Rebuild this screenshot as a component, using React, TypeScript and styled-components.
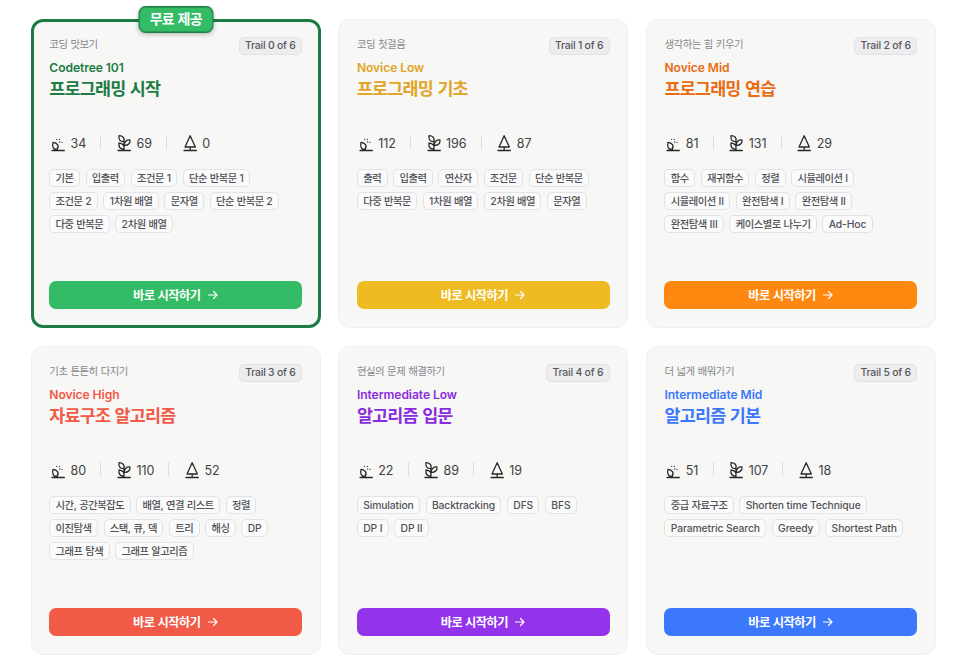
import React from "react";
import styled, { createGlobalStyle } from "styled-components";

const GlobalStyle = createGlobalStyle`
  * { box-sizing: border-box; }
  body {
    margin: 0;
    background: #fff;
    font-family: Inter, "Noto Sans CJK KR", sans-serif;
    overflow: hidden;
  }
`;

const Page = styled.main`
  height: 667px;
  padding: 18.6px 24px 0 30.8px;
  overflow: hidden;
`;

const Grid = styled.div`
  display: grid;
  grid-template-columns: repeat(3, 290px);
  grid-auto-rows: 309px;
  column-gap: 17.6px;
  row-gap: 18px;
`;

const Card = styled.article<{ $featured?: boolean }>`
  position: relative;
  display: flex;
  flex-direction: column;
  padding: ${(p) => (p.$featured ? "15.5px" : "17.5px")};
  padding-top: ${(p) => (p.$featured ? "15px" : "17px")};
  border: ${(p) => (p.$featured ? "3px solid #1d7c45" : "1px solid #f0f0ec")};
  border-radius: 12px;
  background: #f7f7f5;
`;

const FreeBadge = styled.div`
  position: absolute;
  top: -16px;
  left: 50%;
  transform: translateX(-50%);
  display: flex;
  align-items: center;
  justify-content: center;
  width: 75px;
  height: 27px;
  border: 1px solid #1d7c45;
  border-radius: 7px;
  background: #33bb66;
  box-shadow: 0 2px 4px rgba(0, 0, 0, 0.22), inset 0 0 0 0.5px #1d7c45;
  color: #fff;
  font-size: 14px;
  font-weight: 700;
  line-height: 20px;
  white-space: nowrap;
`;

const Header = styled.header`
  display: flex;
  justify-content: space-between;
  height: 91px;
`;

const Titles = styled.div`
  display: flex;
  flex-direction: column;
`;

const Subtitle = styled.div`
  height: 16px;
  line-height: 16px;
  color: #85888e;
  font-size: 10.4px;
`;

const Level = styled.div<{ $color: string }>`
  height: 20px;
  line-height: 29px;
  color: ${(p) => p.$color};
  font-size: 12.1px;
  font-weight: 600;
  letter-spacing: -0.006em;
`;

const Title = styled.h2<{ $color: string }>`
  margin: 4px 0 0;
  line-height: 24px;
  color: ${(p) => p.$color};
  font-size: 17.4px;
  font-weight: 600;
`;

const TrailBadge = styled.div`
  display: flex;
  align-items: center;
  height: 18px;
  padding: 0 5.6px;
  border: 1px solid #e1e2e6;
  border-radius: 5px;
  background: #ededef;
  color: #55575c;
  font-size: 10.4px;
  letter-spacing: -0.02em;
  font-weight: 500;
  white-space: nowrap;
`;

const Stats = styled.div`
  display: flex;
  align-items: center;
  height: 41px;
  padding-bottom: 10px;
`;

const Stat = styled.div`
  display: flex;
  align-items: center;
  gap: 3.3px;
  color: #3f4144;
  font-size: 12.5px;
  letter-spacing: -0.005em;
`;

const Divider = styled.span`
  width: 1px;
  height: 14px;
  margin: -3px 13.8px 0 14.2px;
  background: #dddddf;
`;

const Icon = styled.svg`
  width: 18px;
  height: 18px;
  fill: none;
  stroke: #262727;
  stroke-width: 3.8;
  stroke-linecap: round;
  stroke-linejoin: round;
`;

const Tags = styled.div`
  display: flex;
  flex-direction: column;
  gap: 5px;
`;

const TagRow = styled.div`
  display: flex;
  gap: 5.6px;
`;

const Tag = styled.span`
  display: flex;
  align-items: center;
  height: 18px;
  padding: 0 5.3px;
  border: 1px solid #e2e3e7;
  border-radius: 5px;
  background: #fafafa;
  color: #505257;
  font-size: 10.3px;
  letter-spacing: -0.01em;
  font-weight: 500;
  white-space: pre;
`;

const StartButton = styled.button<{ $color: string }>`
  display: flex;
  align-items: center;
  justify-content: center;
  gap: 6px;
  flex: none;
  height: 28px;
  margin-top: auto;
  border: 0;
  border-radius: 7px;
  background: ${(p) => p.$color};
  color: #fff;
  font-family: inherit;
  font-size: 12.3px;
  font-weight: 700;
`;

const Arrow = styled.svg`
  width: 12px;
  height: 12px;
  fill: none;
  stroke: currentColor;
  stroke-width: 1.2;
  stroke-linecap: round;
  stroke-linejoin: round;
`;

const Hangul = styled.span`
  letter-spacing: -0.045em;
`;

const Label = styled.span`
  white-space: pre;
`;

function Text({ children }: { children: string }) {
  return (
    <Label>
      {children
        .split(/([가-힣]+)/)
        .filter(Boolean)
        .map((run, i) => (/[가-힣]/.test(run) ? <Hangul key={i}>{run}</Hangul> : run))}
    </Label>
  );
}

const SeedIcon = () => (
  <Icon viewBox="0 0 54 54">
    <path d="M9 49.5H46M25 49V41M24 46C12 48 9 37 12 25C24 26 32 36 24 46Z" />
    <path d="M23 16h.1M31 16h.1M32 24h.1M39 25h.1" />
  </Icon>
);

const PlantIcon = () => (
  <Icon viewBox="0 0 54 54">
    <path d="M9 49.5H46M27 49V15M27 23C15 24 10 16 12 5C23 5 30 12 27 23ZM28 34C27 23 35 17 45 18C46 28 39 35 28 34ZM27 45C15 46 10 38 12 27C23 28 29 34 27 45Z" />
  </Icon>
);

const TreeIcon = () => (
  <Icon viewBox="0 0 54 54">
    <path d="M27.5 5L12 39H43ZM27.5 39V49M9 49.5H46" />
  </Icon>
);

interface Trail {
  subtitle: string;
  level: string;
  title: string;
  text: string;
  button: string;
  stats: [number, number, number];
  tags: string[][];
  free?: boolean;
}

const trails: Trail[] = [
  {
    subtitle: "코딩 맛보기",
    level: "Codetree 101",
    title: "프로그래밍 시작",
    text: "#1d7c45",
    button: "#33bb66",
    stats: [34, 69, 0],
    free: true,
    tags: [
      ["기본", "입출력", "조건문 1", "단순 반복문 1"],
      ["조건문 2", "1차원 배열", "문자열", "단순 반복문 2"],
      ["다중 반복문", "2차원 배열"],
    ],
  },
  {
    subtitle: "코딩 첫걸음",
    level: "Novice Low",
    title: "프로그래밍 기초",
    text: "#e0a526",
    button: "#eebb22",
    stats: [112, 196, 87],
    tags: [
      ["출력", "입출력", "연산자", "조건문", "단순 반복문"],
      ["다중 반복문", "1차원 배열", "2차원 배열", "문자열"],
    ],
  },
  {
    subtitle: "생각하는 힘 키우기",
    level: "Novice Mid",
    title: "프로그래밍 연습",
    text: "#e96b12",
    button: "#ff8811",
    stats: [81, 131, 29],
    tags: [
      ["함수", "재귀함수", "정렬", "시뮬레이션 I"],
      ["시뮬레이션 II", "완전탐색 I", "완전탐색 II"],
      ["완전탐색 III", "케이스별로 나누기", "Ad-Hoc"],
    ],
  },
  {
    subtitle: "기초 튼튼히 다지기",
    level: "Novice High",
    title: "자료구조 알고리즘",
    text: "#f05a47",
    button: "#f05a47",
    stats: [80, 110, 52],
    tags: [
      ["시간, 공간복잡도", "배열, 연결 리스트", "정렬"],
      ["이진탐색", "스택, 큐, 덱", "트리", "해싱", "DP"],
      ["그래프 탐색", "그래프 알고리즘"],
    ],
  },
  {
    subtitle: "현실의 문제 해결하기",
    level: "Intermediate Low",
    title: "알고리즘 입문",
    text: "#8a2be0",
    button: "#9333ea",
    stats: [22, 89, 19],
    tags: [
      ["Simulation", "Backtracking", "DFS", "BFS"],
      ["DP I", "DP II"],
    ],
  },
  {
    subtitle: "더 넓게 배워가기",
    level: "Intermediate Mid",
    title: "알고리즘 기본",
    text: "#3b78fb",
    button: "#3b78fb",
    stats: [51, 107, 18],
    tags: [
      ["중급 자료구조", "Shorten time Technique"],
      ["Parametric Search", "Greedy", "Shortest Path"],
    ],
  },
];

function TrailCard({ trail, index }: { trail: Trail; index: number }) {
  return (
    <Card $featured={trail.free}>
      {trail.free && (
        <FreeBadge>
          <Text>무료 제공</Text>
        </FreeBadge>
      )}
      <Header>
        <Titles>
          <Subtitle>
            <Text>{trail.subtitle}</Text>
          </Subtitle>
          <Level $color={trail.text}>{trail.level}</Level>
          <Title $color={trail.text}>
            <Text>{trail.title}</Text>
          </Title>
        </Titles>
        <TrailBadge>{`Trail ${index} of 6`}</TrailBadge>
      </Header>
      <Stats>
        <Stat>
          <SeedIcon />
          {trail.stats[0]}
        </Stat>
        <Divider />
        <Stat>
          <PlantIcon />
          {trail.stats[1]}
        </Stat>
        <Divider />
        <Stat>
          <TreeIcon />
          {trail.stats[2]}
        </Stat>
      </Stats>
      <Tags>
        {trail.tags.map((row, i) => (
          <TagRow key={i}>
            {row.map((tag) => (
              <Tag key={tag}>
                <Text>{tag}</Text>
              </Tag>
            ))}
          </TagRow>
        ))}
      </Tags>
      <StartButton $color={trail.button}>
        <Text>바로 시작하기</Text>
        <Arrow viewBox="0 0 12 12">
          <path d="M1.5 6H10M6.5 2.5L10 6L6.5 9.5" />
        </Arrow>
      </StartButton>
    </Card>
  );
}

export default function App() {
  return (
    <>
      <GlobalStyle />
      <Page>
        <Grid>
          {trails.map((trail, i) => (
            <TrailCard key={trail.level} trail={trail} index={i} />
          ))}
        </Grid>
      </Page>
    </>
  );
}
